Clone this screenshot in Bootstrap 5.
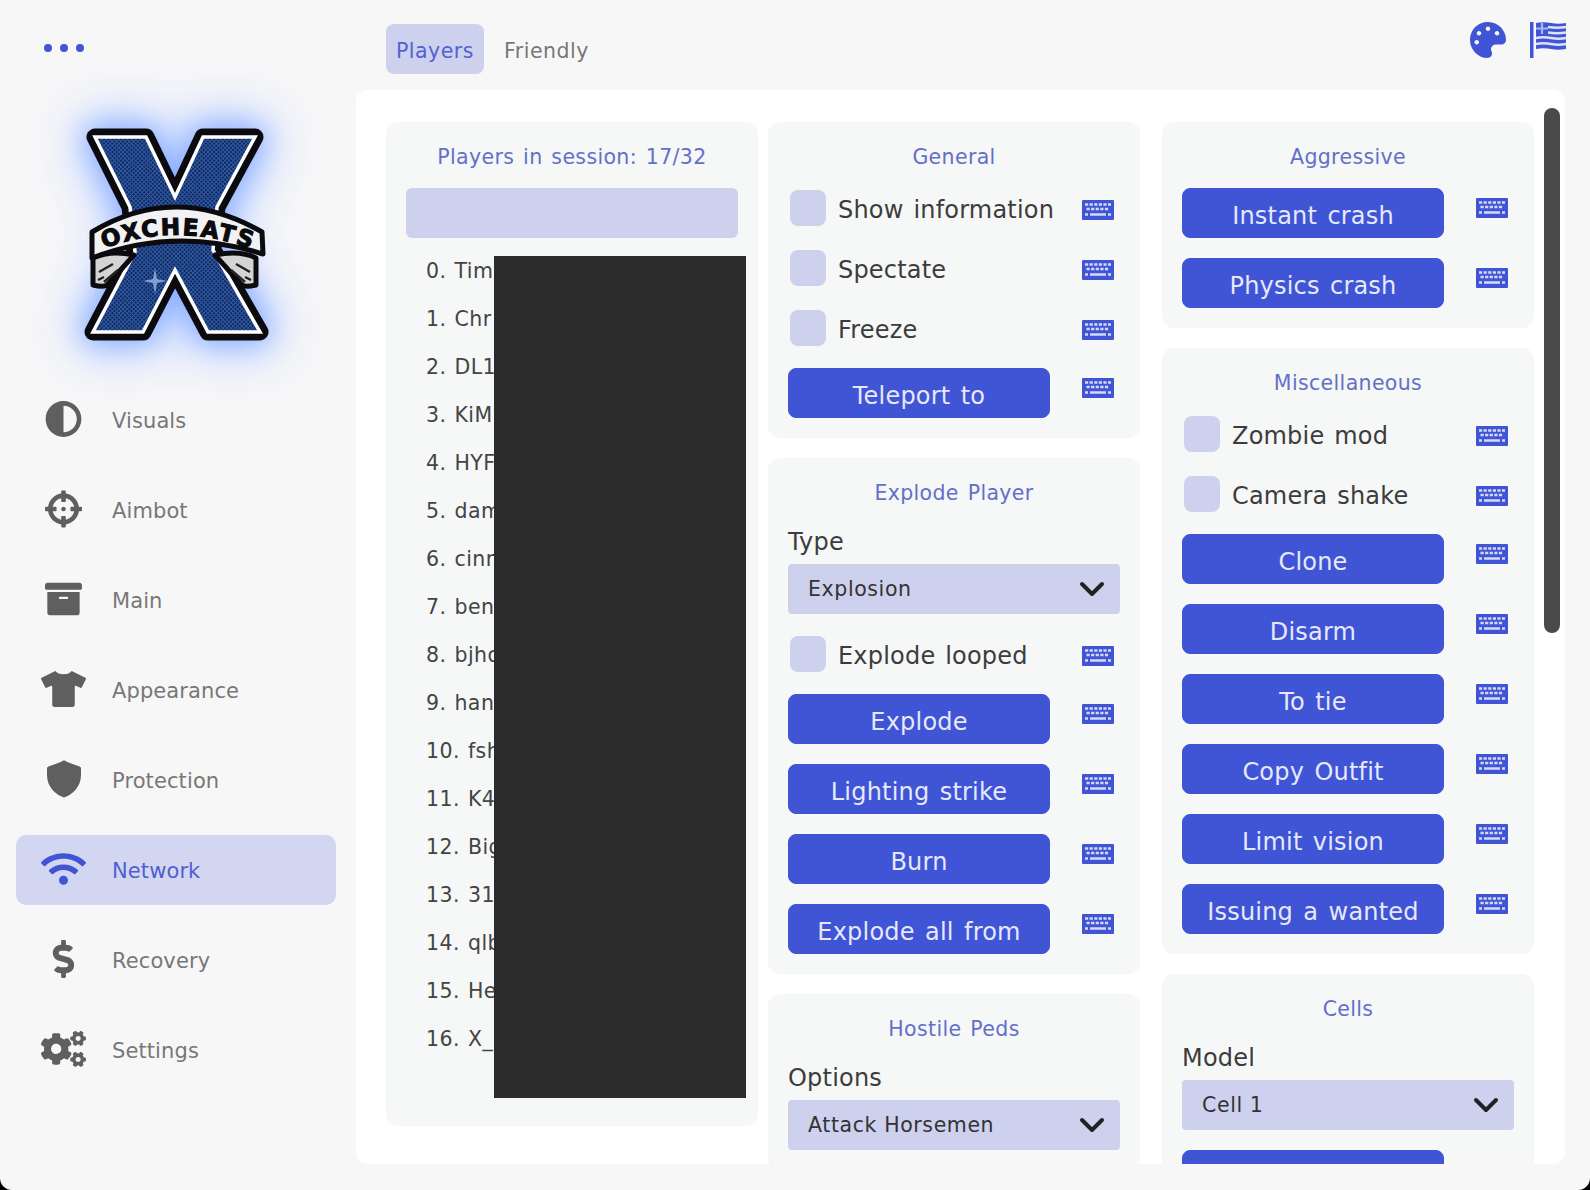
<!DOCTYPE html>
<html lang="en">
<head>
<meta charset="UTF-8">
<title>0xCheats</title>
<link href="https://cdn.jsdelivr.net/npm/bootstrap@5.3.0/dist/css/bootstrap.min.css" rel="stylesheet">
<style>
html, body { height: 100%; overflow: hidden; background: #000; }
body { font-family: "DejaVu Sans", sans-serif; color: #3c3c3c; }
.app-window { height: 1190px; background: #f7f7f8; border-radius: 0 0 12px 12px; overflow: hidden; }

.side-col { width: 356px; flex: none; }
.side-dots { height: 85px; padding: 44px 0 0 44px; gap: 8px; }
.side-dots i { width: 8px; height: 8px; border-radius: 50%; background: #4054d6; }
.logo-box { display: block; width: 356px; height: 300px; overflow: visible; }
.logo-glow { filter: drop-shadow(0 0 14px #86abff) drop-shadow(0 0 22px #b4caff) drop-shadow(0 0 22px #d9e4ff); }
.side-nav { padding: 0 20px 0 16px; gap: 20px; }
.side-nav .nav-link { height: 70px; padding: 0 0 0 25px; border-radius: 10px; color: #777; font-size: 21px; letter-spacing: .1px; gap: 26px; }
.side-nav .nav-link span { padding-top: 4px; }
.side-nav .nav-link.active { background: #d3d6f0; color: #4f5fd0; }
.side-nav .nav-link svg { width: 45px; height: 38px; fill: #5f5f5f; flex: none; margin-top: -2px; }
.side-nav .nav-link.active svg { fill: #4054d6; }

.top-bar { height: 90px; padding: 24px 23px 0 30px; }
.top-tabs { gap: 10px; }
.top-tabs .nav-link { height: 50px; padding: 0 10px; border-radius: 8px; color: #777; font-size: 20.5px; letter-spacing: .5px; line-height: 54px; }
.top-tabs .nav-link.active { background: #cdd1ee; color: #5262d2; }
.top-ico { fill: #4054d6; height: 36px; margin-top: -2px; }

.main-col { min-width: 0; }
.panel-box { background: #fff; border-radius: 12px; margin: 0 25px 26px 0; padding: 32px 0 0 30px; overflow: hidden; gap: 10px; min-height: 0; flex: 1; }
.panel-thumb { position: absolute; top: 18px; right: 5px; width: 16px; height: 525px; border-radius: 8px; background: #4a4a4a; }
.col-stack { width: 372px; flex: none; gap: 20px; }
.col-stack.col-last { margin-left: 12px; }
.group-card { background: #f6f7f7; border: 0; border-radius: 12px; padding: 20px; gap: 20px; flex: none; }
.group-title { height: 26px; line-height: 30px; text-align: center; font-size: 20.5px; letter-spacing: .35px; word-spacing: 2px; color: #6270c8; }
.players-card { height: 1004px; }
.players-search { height: 50px; background: #cdd1ee; border: 0; border-radius: 6px; }
.players-list { margin-top: -12px; --bs-list-group-bg: transparent; }
.players-list .list-group-item { height: 48px; line-height: 50px; padding: 0 0 0 20px; border: 0; font-size: 20.5px; letter-spacing: .45px; word-spacing: 1px; color: #444; white-space: nowrap; }
.redact-box { position: absolute; left: 108px; top: 134px; width: 252px; height: 842px; background: #2b2b2b; }

.check-row { height: 40px; }
.check-row .form-check-input { width: 36px; height: 36px; margin: 0 12px 0 2px; background-color: #cdd1ee; border: 0; border-radius: 8px; flex: none; }
.check-row label { font-size: 24px; letter-spacing: .2px; word-spacing: 2px; color: #3c3c3c; width: 244px; flex: none; white-space: nowrap; padding-top: 4px; }
.key-ico { width: 32px; height: 20px; flex: none; }
.check-row .key-ico { margin-top: 4px; }
.btn-row { height: 50px; }
.action-btn { width: 262px; height: 50px; --bs-btn-bg: #4054d6; --bs-btn-border-color: #4054d6; --bs-btn-hover-bg: #3546bd; --bs-btn-border-radius: 8px; --bs-btn-color: #e6e9fb; --bs-btn-font-size: 24px; letter-spacing: .2px; word-spacing: 2.5px; padding: 5px 0 0; flex: none; }
.btn-row .key-ico { margin-top: -10px; margin-left: 32px; }
.select-wrap label { display: block; height: 40px; font-size: 24px; line-height: 36px; letter-spacing: .2px; color: #3c3c3c; }
.select-wrap .form-select { height: 50px; background-color: #cdd1ee; border: 0; border-radius: 4px; font-size: 20.5px; letter-spacing: .6px; color: #333; padding: 0 50px 0 20px; background-size: 26px 16px; background-position: right 15px center; --bs-form-select-bg-img: url("data:image/svg+xml,%3csvg xmlns='http://www.w3.org/2000/svg' viewBox='0 0 26 16'%3e%3cpath fill='none' stroke='%23222' stroke-width='4' stroke-linecap='round' stroke-linejoin='round' d='M3 3l10 10L23 3'/%3e%3c/svg%3e"); }
</style>
</head>
<body>
<svg width="0" height="0" class="position-absolute">
  <symbol id="key-sym" viewBox="0 0 32 20">
    <rect width="32" height="20" rx="1" fill="#4054d6"/>
    <path d="M3 4.500h26M4.500 9h23" stroke="#d5d9f6" stroke-width="2.400" stroke-dasharray="3.200 1.400" fill="none"/>
    <path d="M3 14.500h3M8 14.500h16M26 14.500h3" stroke="#d5d9f6" stroke-width="2.600" fill="none"/>
  </symbol>
</svg>

<div class="app-window d-flex">
  <div class="side-col d-flex flex-column">
    <div class="side-dots d-flex"><i></i><i></i><i></i></div>

    <svg class="logo-box" viewBox="0 85 356 300" xmlns="http://www.w3.org/2000/svg">
      <defs>
        <pattern id="denim" width="3" height="3" patternUnits="userSpaceOnUse" patternTransform="rotate(45)">
          <rect width="3" height="3" fill="#2f5aa8"/>
          <rect width="2" height="2" fill="#102655"/>
        </pattern>
        <path id="ribbon-line" d="M103 249 Q175 221 252 249"/>
      </defs>
      <g class="logo-glow">
        <polygon points="95,137 146,137 175,197 203,137 255,137 217,207 213,250 260,332 208,332 175,270 143,332 93,332 135,252 130,207" fill="#0a0a0f" stroke="#0a0a0f" stroke-width="17" stroke-linejoin="round"/>
      </g>
      <polygon points="95,137 146,137 175,197 203,137 255,137 217,207 213,250 260,332 208,332 175,270 143,332 93,332 135,252 130,207" fill="url(#denim)" stroke="#fff" stroke-width="3.500" stroke-linejoin="miter"/>
      <path d="M155 268l2 11 10 2-10 2-2 11-2-11-10-2 10-2z" fill="#a9c6f5" opacity=".7"/>
      <path d="M93 258 L93 285 Q105 288 108 284 L134 255 Q110 250 93 258z" fill="#d4d4d4" stroke="#0a0a0f" stroke-width="5" stroke-linejoin="round"/>
      <path d="M256 258 L256 285 Q244 288 241 284 L215 255 Q240 250 256 258z" fill="#d4d4d4" stroke="#0a0a0f" stroke-width="5" stroke-linejoin="round"/>
      <path d="M99 272l14-8M104 282l14-12M98 280l6-3M250 272l-14-8M245 282l-14-12M251 280l-6-3" stroke="#222" stroke-width="2.500"/>
      <path d="M92 232 Q175 182 262 232 L263 254 Q175 226 92 258z" fill="#f2f2f2" stroke="#0a0a0f" stroke-width="5" stroke-linejoin="round"/>
      <text font-family="'DejaVu Sans',sans-serif" font-weight="700" font-size="23" fill="#0a0a0f" stroke="#0a0a0f" stroke-width="1.100" text-anchor="middle"><textPath href="#ribbon-line" startOffset="50%" textLength="150">OXCHEATS</textPath></text>
    </svg>

    <nav class="side-nav nav nav-pills flex-column">
      <a class="nav-link d-flex align-items-center" href="#"><svg viewBox="-56 0 624 512"><path d="M8 256c0 136.966 111.033 248 248 248s248-111.034 248-248S392.966 8 256 8 8 119.033 8 256zm248 184V72c101.705 0 184 82.311 184 184 0 101.705-82.311 184-184 184z"/></svg><span>Visuals</span></a>
      <a class="nav-link d-flex align-items-center" href="#"><svg viewBox="-56 0 624 512"><path d="M500 224h-30.364C455.724 130.325 381.675 56.276 288 42.364V12c0-6.627-5.373-12-12-12h-40c-6.627 0-12 5.373-12 12v30.364C130.325 56.276 56.276 130.325 42.364 224H12c-6.627 0-12 5.373-12 12v40c0 6.627 5.373 12 12 12h30.364C56.276 381.675 130.325 455.724 224 469.636V500c0 6.627 5.373 12 12 12h40c6.627 0 12-5.373 12-12v-30.364C381.675 455.724 455.724 381.675 469.636 288H500c6.627 0 12-5.373 12-12v-40c0-6.627-5.373-12-12-12zM288 404.634V364c0-6.627-5.373-12-12-12h-40c-6.627 0-12 5.373-12 12v40.634C165.826 392.232 119.783 346.243 107.366 288H148c6.627 0 12-5.373 12-12v-40c0-6.627-5.373-12-12-12h-40.634C119.768 165.826 165.757 119.783 224 107.366V148c0 6.627 5.373 12 12 12h40c6.627 0 12-5.373 12-12v-40.634C346.174 119.768 392.217 165.757 404.634 224H364c-6.627 0-12 5.373-12 12v40c0 6.627 5.373 12 12 12h40.634C392.232 346.174 346.243 392.217 288 404.634zM288 256c0 17.673-14.327 32-32 32s-32-14.327-32-32c0-17.673 14.327-32 32-32s32 14.327 32 32z"/></svg><span>Aimbot</span></a>
      <a class="nav-link d-flex align-items-center" href="#"><svg viewBox="-56 16 624 480"><path d="M32 448c0 17.7 14.3 32 32 32h384c17.7 0 32-14.3 32-32V160H32v288zm160-212c0-6.6 5.4-12 12-12h104c6.6 0 12 5.4 12 12v8c0 6.6-5.4 12-12 12H204c-6.6 0-12-5.4-12-12v-8zM480 32H32C14.3 32 0 46.3 0 64v48c0 8.8 7.2 16 16 16h480c8.8 0 16-7.2 16-16V64c0-17.7-14.3-32-32-32z"/></svg><span>Main</span></a>
      <a class="nav-link d-flex align-items-center" href="#"><svg viewBox="0 0 640 512"><path d="M631.2 96.500L436.500 0C416.400 27.800 371.900 47.200 320 47.200S223.600 27.800 203.500 0L8.800 96.500c-7.900 4-11.100 13.600-7.200 21.500l57.200 114.500c4 7.900 13.600 11.100 21.500 7.200l56.600-27.700c10.600-5.200 23 2.500 23 14.400V480c0 17.700 14.300 32 32 32h256c17.700 0 32-14.300 32-32V226.300c0-11.800 12.400-19.600 23-14.400l56.600 27.700c7.900 4 17.500.8 21.500-7.200L638.300 118c4-7.900.8-17.600-7.100-21.500z"/></svg><span>Appearance</span></a>
      <a class="nav-link d-flex align-items-center" href="#"><svg viewBox="-5 0 44 38"><path d="M17.500 .5Q19 .5 20 1.800L33 6.500C34 7 34.500 7.500 34.500 8.500V15C34.500 27 26 34.500 17.500 37.500C9 34.500 .5 27 .5 15V8.500C.5 7.500 1 7 2 6.500L15 1.800Q16 .5 17.500 .5Z"/></svg><span>Protection</span></a>
      <a class="nav-link active d-flex align-items-center" href="#"><svg viewBox="0 0 640 512"><path d="M634.91 154.88C457.74-8.99 182.19-8.93 5.09 154.88c-6.66 6.16-6.79 16.59-.35 22.98l34.24 33.97c6.14 6.1 16.02 6.23 22.4.38 145.92-133.68 371.3-133.71 517.25 0 6.38 5.85 16.26 5.71 22.4-.38l34.24-33.97c6.43-6.39 6.3-16.82-.36-22.98zM320 352c-35.35 0-64 28.65-64 64s28.65 64 64 64 64-28.65 64-64-28.65-64-64-64zm202.67-83.59c-115.26-101.93-290.21-101.82-405.34 0-6.9 6.1-7.12 16.69-.57 23.15l34.44 33.99c6 5.92 15.66 6.32 22.05.8 83.95-72.57 209.74-72.41 293.49 0 6.39 5.52 16.05 5.13 22.05-.8l34.44-33.99c6.56-6.46 6.33-17.06-.56-23.15z"/></svg><span>Network</span></a>
      <a class="nav-link d-flex align-items-center" href="#"><svg viewBox="0 0 288 512"><path d="M209.2 233.4l-108-31.6C88.7 198.2 80 186.5 80 173.5c0-16.3 13.2-29.5 29.5-29.5h66.3c12.2 0 24.2 3.7 34.2 10.5 6.1 4.1 14.3 3.1 19.5-2l34.8-34c7.1-6.9 6.1-18.4-1.8-24.5C238 74.8 207.4 64.1 176 64V16c0-8.8-7.2-16-16-16h-32c-8.8 0-16 7.2-16 16v48h-2.5C45.8 64-5.4 118.7.5 183.6c4.2 46.1 39.4 83.6 83.8 96.6l102.5 30c12.5 3.7 21.2 15.3 21.2 28.3 0 16.3-13.2 29.5-29.5 29.5h-66.3C100 368 88 364.3 78 357.5c-6.1-4.1-14.3-3.1-19.5 2l-34.8 34c-7.1 6.9-6.1 18.4 1.8 24.5 24.5 19.2 55.1 29.9 86.5 30v48c0 8.8 7.2 16 16 16h32c8.8 0 16-7.2 16-16v-48.2c46.6-.9 90.3-28.6 105.7-72.7 21.5-61.6-14.6-124.8-72.5-141.7z"/></svg><span>Recovery</span></a>
      <a class="nav-link d-flex align-items-center" href="#"><svg viewBox="0 0 640 512"><path d="M512.1 191l-8.2 14.3c-3 5.3-9.4 7.5-15.1 5.4-11.8-4.4-22.6-10.7-32.1-18.6-4.6-3.8-5.8-10.5-2.8-15.7l8.2-14.3c-6.9-8-12.3-17.3-15.9-27.4h-16.5c-6 0-11.2-4.3-12.2-10.3-2-12-2.1-24.6 0-37.1 1-6 6.2-10.4 12.2-10.4h16.5c3.6-10.1 9-19.4 15.9-27.4l-8.2-14.3c-3-5.2-1.9-11.9 2.8-15.7 9.5-7.9 20.4-14.2 32.1-18.6 5.7-2.1 12.1.1 15.1 5.4l8.2 14.3c10.5-1.9 21.2-1.9 31.7 0L552 6.3c3-5.3 9.4-7.5 15.1-5.4 11.8 4.4 22.6 10.7 32.1 18.6 4.6 3.8 5.8 10.5 2.8 15.7l-8.2 14.3c6.9 8 12.3 17.3 15.9 27.4h16.5c6 0 11.2 4.3 12.2 10.3 2 12 2.1 24.6 0 37.1-1 6-6.2 10.4-12.2 10.4h-16.5c-3.6 10.1-9 19.4-15.9 27.4l8.2 14.3c3 5.2 1.9 11.9-2.8 15.7-9.5 7.9-20.4 14.2-32.1 18.6-5.7 2.1-12.1-.1-15.1-5.4l-8.2-14.3c-10.4 1.9-21.2 1.9-31.7 0zm-10.5-58.8c38.5 29.6 82.4-14.3 52.8-52.8-38.5-29.7-82.4 14.3-52.8 52.8zM386.3 286.1l33.7 16.8c10.1 5.8 14.5 18.1 10.5 29.1-8.9 24.2-26.4 46.4-42.6 65.8-7.4 8.9-20.2 11.1-30.3 5.3l-29.1-16.8c-16 13.7-34.6 24.6-54.9 31.7v33.6c0 11.6-8.3 21.6-19.7 23.6-24.6 4.2-50.4 4.4-75.9 0-11.5-2-20-11.9-20-23.6V418c-20.3-7.2-38.9-18-54.9-31.7L74 403c-10 5.8-22.9 3.6-30.3-5.3-16.2-19.4-33.3-41.6-42.2-65.7-4-10.9.4-23.2 10.5-29.1l33.3-16.8c-3.9-20.9-3.9-42.4 0-63.4L12 205.8c-10.1-5.8-14.6-18.1-10.5-29 8.9-24.2 26-46.4 42.2-65.8 7.4-8.9 20.2-11.1 30.3-5.3l29.1 16.8c16-13.7 34.6-24.6 54.9-31.7V57.1c0-11.5 8.2-21.5 19.6-23.5 24.6-4.2 50.5-4.4 76-.1 11.5 2 20 11.9 20 23.6v33.6c20.3 7.2 38.9 18 54.9 31.7l29.1-16.8c10-5.8 22.9-3.6 30.3 5.3 16.2 19.4 33.2 41.6 42.1 65.8 4 10.9.1 23.2-10 29.1l-33.7 16.8c3.9 21 3.9 42.5 0 63.5zm-117.6 21.1c59.2-77-28.7-164.9-105.7-105.7-59.2 77 28.7 164.9 105.7 105.7zm243.4 182.7l-8.2 14.3c-3 5.3-9.4 7.5-15.1 5.4-11.8-4.4-22.6-10.7-32.1-18.6-4.6-3.8-5.8-10.5-2.8-15.7l8.2-14.3c-6.9-8-12.3-17.3-15.9-27.4h-16.5c-6 0-11.2-4.3-12.2-10.3-2-12-2.1-24.6 0-37.1 1-6 6.2-10.4 12.2-10.4h16.5c3.6-10.1 9-19.4 15.9-27.4l-8.2-14.3c-3-5.2-1.9-11.9 2.8-15.7 9.5-7.9 20.4-14.2 32.1-18.6 5.7-2.1 12.1.1 15.1 5.4l8.2 14.3c10.5-1.9 21.2-1.9 31.7 0l8.2-14.3c3-5.3 9.4-7.5 15.1-5.4 11.8 4.4 22.6 10.7 32.1 18.6 4.6 3.8 5.8 10.5 2.8 15.7l-8.2 14.3c6.9 8 12.3 17.3 15.9 27.4h16.5c6 0 11.2 4.3 12.2 10.3 2 12 2.1 24.6 0 37.1-1 6-6.2 10.4-12.2 10.4h-16.5c-3.6 10.1-9 19.4-15.9 27.4l8.2 14.3c3 5.2 1.9 11.9-2.8 15.7-9.5 7.9-20.4 14.2-32.1 18.6-5.7 2.1-12.1-.1-15.1-5.4l-8.2-14.3c-10.4 1.9-21.2 1.9-31.7 0zM501.6 431c38.5 29.6 82.4-14.3 52.8-52.8-38.5-29.6-82.4 14.3-52.8 52.8z"/></svg><span>Settings</span></a>
    </nav>
  </div>

  <div class="main-col flex-grow-1 d-flex flex-column">
    <div class="top-bar d-flex justify-content-between align-items-start">
      <ul class="top-tabs nav nav-pills">
        <li class="nav-item"><a class="nav-link active" href="#">Players</a></li>
        <li class="nav-item"><a class="nav-link" href="#">Friendly</a></li>
      </ul>
      <div class="d-flex gap-4">
        <svg class="top-ico" viewBox="0 0 512 512"><path d="M204.3 5C104.9 24.4 24.8 104.3 5.2 203.4c-37 187 131.7 326.4 258.8 306.7 41.2-6.4 61.4-54.6 42.5-91.7-23.1-45.4 9.9-98.4 60.9-98.4h79.7c35.8 0 64.8-29.6 64.9-65.3C511.5 97.1 368.1-26.9 204.3 5zM96 320c-17.7 0-32-14.3-32-32s14.3-32 32-32 32 14.3 32 32-14.3 32-32 32zm32-128c-17.7 0-32-14.3-32-32s14.3-32 32-32 32 14.3 32 32-14.3 32-32 32zm128-64c-17.7 0-32-14.3-32-32s14.3-32 32-32 32 14.3 32 32-14.3 32-32 32zm128 64c-17.7 0-32-14.3-32-32s14.3-32 32-32 32 14.3 32 32-14.3 32-32 32z"/></svg>
        <svg class="top-ico" viewBox="0 0 37 36">
          <rect x="0" y="0" width="3.500" height="36"/>
          <path d="M6 1q7-1.500 15 0t15 0v26q-8 1.500-15 0t-15 0z"/>
          <path d="M18 5q9 1.500 18 0M18 10.500q9 1.500 18 0M6 16q7-1.500 15 0t15 0M6 22q7-1.500 15 0t15 0" fill="none" stroke="#dfe3f8" stroke-width="2.600"/>
          <path d="M6 6.500h12M12 1v11" fill="none" stroke="#a9b3ec" stroke-width="2.200"/>
        </svg>
      </div>
    </div>

    <div class="panel-box position-relative d-flex">
      <div class="panel-thumb"></div>

      <div class="col-stack d-flex flex-column">
        <div class="group-card players-card card position-relative">
          <div class="group-title">Players in session: 17/32</div>
          <input class="players-search form-control" type="text" aria-label="Search">
          <ul class="players-list list-group list-group-flush">
            <li class="list-group-item">0. Tim</li>
            <li class="list-group-item">1. Chr</li>
            <li class="list-group-item">2. DL1</li>
            <li class="list-group-item">3. KiM</li>
            <li class="list-group-item">4. HYF</li>
            <li class="list-group-item">5. dam</li>
            <li class="list-group-item">6. cinn</li>
            <li class="list-group-item">7. ben</li>
            <li class="list-group-item">8. bjho</li>
            <li class="list-group-item">9. han</li>
            <li class="list-group-item">10. fsh</li>
            <li class="list-group-item">11. K4</li>
            <li class="list-group-item">12. Big</li>
            <li class="list-group-item">13. 31</li>
            <li class="list-group-item">14. qlb</li>
            <li class="list-group-item">15. He</li>
            <li class="list-group-item">16. X_</li>
          </ul>
          <div class="redact-box"></div>
        </div>
      </div>

      <div class="col-stack d-flex flex-column">
        <div class="group-card card">
          <div class="group-title">General</div>
          <div class="check-row d-flex align-items-center"><input class="form-check-input" type="checkbox" id="c1"><label for="c1">Show information</label><svg class="key-ico"><use href="#key-sym"/></svg></div>
          <div class="check-row d-flex align-items-center"><input class="form-check-input" type="checkbox" id="c2"><label for="c2">Spectate</label><svg class="key-ico"><use href="#key-sym"/></svg></div>
          <div class="check-row d-flex align-items-center"><input class="form-check-input" type="checkbox" id="c3"><label for="c3">Freeze</label><svg class="key-ico"><use href="#key-sym"/></svg></div>
          <div class="btn-row d-flex align-items-center"><button class="btn action-btn" type="button">Teleport to</button><svg class="key-ico"><use href="#key-sym"/></svg></div>
        </div>
        <div class="group-card card">
          <div class="group-title">Explode Player</div>
          <div class="select-wrap"><label for="s1">Type</label><select class="form-select" id="s1"><option>Explosion</option></select></div>
          <div class="check-row d-flex align-items-center"><input class="form-check-input" type="checkbox" id="c4"><label for="c4">Explode looped</label><svg class="key-ico"><use href="#key-sym"/></svg></div>
          <div class="btn-row d-flex align-items-center"><button class="btn action-btn" type="button">Explode</button><svg class="key-ico"><use href="#key-sym"/></svg></div>
          <div class="btn-row d-flex align-items-center"><button class="btn action-btn" type="button">Lighting strike</button><svg class="key-ico"><use href="#key-sym"/></svg></div>
          <div class="btn-row d-flex align-items-center"><button class="btn action-btn" type="button">Burn</button><svg class="key-ico"><use href="#key-sym"/></svg></div>
          <div class="btn-row d-flex align-items-center"><button class="btn action-btn" type="button">Explode all from</button><svg class="key-ico"><use href="#key-sym"/></svg></div>
        </div>
        <div class="group-card card">
          <div class="group-title">Hostile Peds</div>
          <div class="select-wrap"><label for="s2">Options</label><select class="form-select" id="s2"><option>Attack Horsemen</option></select></div>
        </div>
      </div>

      <div class="col-stack col-last d-flex flex-column">
        <div class="group-card card">
          <div class="group-title">Aggressive</div>
          <div class="btn-row d-flex align-items-center"><button class="btn action-btn" type="button">Instant crash</button><svg class="key-ico"><use href="#key-sym"/></svg></div>
          <div class="btn-row d-flex align-items-center"><button class="btn action-btn" type="button">Physics crash</button><svg class="key-ico"><use href="#key-sym"/></svg></div>
        </div>
        <div class="group-card card">
          <div class="group-title">Miscellaneous</div>
          <div class="check-row d-flex align-items-center"><input class="form-check-input" type="checkbox" id="c5"><label for="c5">Zombie mod</label><svg class="key-ico"><use href="#key-sym"/></svg></div>
          <div class="check-row d-flex align-items-center"><input class="form-check-input" type="checkbox" id="c6"><label for="c6">Camera shake</label><svg class="key-ico"><use href="#key-sym"/></svg></div>
          <div class="btn-row d-flex align-items-center"><button class="btn action-btn" type="button">Clone</button><svg class="key-ico"><use href="#key-sym"/></svg></div>
          <div class="btn-row d-flex align-items-center"><button class="btn action-btn" type="button">Disarm</button><svg class="key-ico"><use href="#key-sym"/></svg></div>
          <div class="btn-row d-flex align-items-center"><button class="btn action-btn" type="button">To tie</button><svg class="key-ico"><use href="#key-sym"/></svg></div>
          <div class="btn-row d-flex align-items-center"><button class="btn action-btn" type="button">Copy Outfit</button><svg class="key-ico"><use href="#key-sym"/></svg></div>
          <div class="btn-row d-flex align-items-center"><button class="btn action-btn" type="button">Limit vision</button><svg class="key-ico"><use href="#key-sym"/></svg></div>
          <div class="btn-row d-flex align-items-center"><button class="btn action-btn" type="button">Issuing a wanted</button><svg class="key-ico"><use href="#key-sym"/></svg></div>
        </div>
        <div class="group-card card">
          <div class="group-title">Cells</div>
          <div class="select-wrap"><label for="s3">Model</label><select class="form-select" id="s3"><option>Cell 1</option></select></div>
          <div class="btn-row d-flex align-items-center"><button class="btn action-btn" type="button" aria-label="Spawn"></button></div>
        </div>
      </div>
    </div>
  </div>
</div>
<script src="https://cdn.jsdelivr.net/npm/bootstrap@5.3.0/dist/js/bootstrap.bundle.min.js"></script>
</body>
</html>
